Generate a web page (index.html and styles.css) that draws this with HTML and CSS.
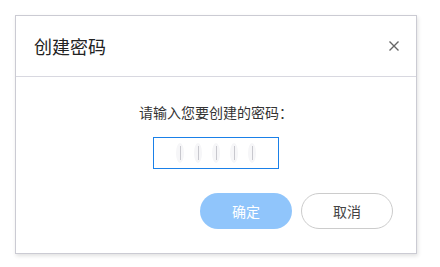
FILE: index.html
```html
<!DOCTYPE html>
<html lang="zh-CN">
<head>
    <meta charset="UTF-8">
    <meta name="viewport" content="width=device-width, initial-scale=1.0">
    <title>创建密码</title>
    <link rel="stylesheet" href="styles.css">
</head>
<body>
    <div class="dialog">
        <div class="dialog-header">
            <h2 class="dialog-title">创建密码</h2>
            <button class="close-btn" aria-label="关闭">
                <svg width="10" height="10" viewBox="0 0 10 10">
                    <path d="M0.5 0.5 L9.5 9.5 M9.5 0.5 L0.5 9.5" stroke="#666" stroke-width="1.4" fill="none"/>
                </svg>
            </button>
        </div>

        <div class="dialog-body">
            <p class="prompt">请输入您要创建的密码：</p>
            <div class="pin-box">
                <span class="pin-cell"></span>
                <span class="pin-cell"></span>
                <span class="pin-cell"></span>
                <span class="pin-cell"></span>
                <span class="pin-cell"></span>
            </div>
        </div>

        <div class="dialog-footer">
            <button class="btn btn-primary" disabled>确定</button>
            <button class="btn btn-default">取消</button>
        </div>
    </div>
</body>
</html>
```

FILE: styles.css
```css
* {
    box-sizing: border-box;
    margin: 0;
    padding: 0;
    font-family: "Microsoft YaHei", "Noto Sans CJK SC", "Noto Sans", sans-serif;
}

body {
    background: #fff;
    padding: 15px;
}

.dialog {
    width: 402px;
    height: 239px;
    border: 1px solid #cbcbd3;
    background: #fff;
    box-shadow: 1px 2px 4px rgba(0, 0, 0, 0.12);
    display: flex;
    flex-direction: column;
}

.dialog-header {
    height: 61px;
    border-bottom: 1px solid #d8d8e0;
    display: flex;
    align-items: center;
    justify-content: space-between;
    padding: 0 17px 0 18px;
}

.dialog-title {
    font-size: 18px;
    font-weight: normal;
    color: #222;
    line-height: 24px;
}

.close-btn {
    border: none;
    background: none;
    width: 10px;
    height: 10px;
    display: flex;
    cursor: pointer;
}

.dialog-body {
    padding-top: 25px;
    display: flex;
    flex-direction: column;
    align-items: center;
}

.prompt {
    font-size: 14px;
    line-height: 20px;
    color: #333;
}

.pin-box {
    margin-top: 15px;
    width: 126px;
    height: 32px;
    border: 1px solid #1a80e8;
    display: flex;
    justify-content: center;
    align-items: center;
    gap: 10px;
}

.pin-cell {
    width: 8px;
    height: 20px;
    border-radius: 50%;
    background: #f6f6f8;
    display: flex;
    justify-content: center;
    align-items: center;
}

.pin-cell::before {
    content: "";
    width: 1px;
    height: 14px;
    background: #c8c8ce;
}

.dialog-footer {
    margin-top: 24px;
    display: flex;
    justify-content: flex-end;
    gap: 9px;
    padding-right: 23px;
}

.btn {
    width: 92px;
    height: 36px;
    border-radius: 18px;
    font-size: 14px;
    cursor: pointer;
}

.btn-primary {
    border: none;
    background: #90c5fb;
    color: #fff;
}

.btn-default {
    border: 1px solid #cccccc;
    background: #fff;
    color: #444;
}
```
